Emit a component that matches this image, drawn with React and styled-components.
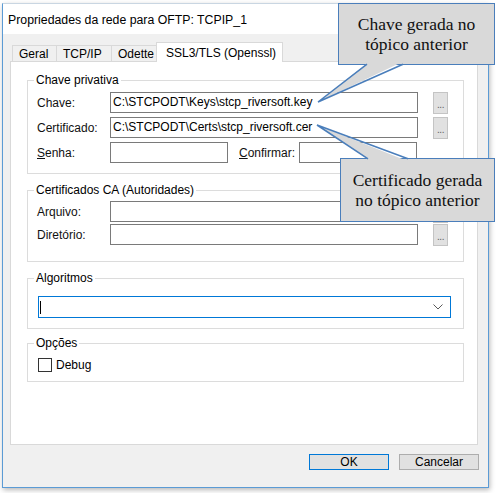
import React from "react";
import styled, { createGlobalStyle } from "styled-components";

const GlobalStyle = createGlobalStyle`
  html, body {
    margin: 0;
    padding: 0;
    background: #ffffff;
  }
  body {
    font-family: "Liberation Sans", Arial, sans-serif;
    font-size: 12px;
    color: #000;
  }
  * { box-sizing: border-box; }
`;

const Page = styled.div`
  position: relative;
  width: 497px;
  height: 493px;
  overflow: hidden;
  padding: 3px 0 0 2px;
`;

const Window = styled.div`
  width: 487px;
  height: 485px;
  border: 1px solid #5b9bd5;
  border-top-color: #c9d6e2;
  box-shadow: 1px 2px 5px rgba(0, 0, 0, 0.28);
  background: #f0f0f0;
  display: flex;
  flex-direction: column;
`;

const TitleBar = styled.div`
  height: 30px;
  flex: none;
  background: #fff;
  display: flex;
  align-items: center;
  padding: 2px 0 0 5px;
  font-size: 12.3px;
  color: #000;
`;

const Client = styled.div`
  flex: 1;
  display: flex;
  flex-direction: column;
  padding: 8px 10px 0 7px;
`;

const TabStrip = styled.div`
  display: flex;
  align-items: flex-end;
  height: 20px;
  padding-left: 3px;
  margin-bottom: -1px;
  position: relative;
  z-index: 1;
`;

const Tab = styled.div`
  width: ${(p) => p.$w}px;
  height: ${(p) => (p.$active ? 20 : 17)}px;
  margin-left: -1px;
  border: 1px solid #d9d9d9;
  border-bottom: ${(p) => (p.$active ? "none" : "1px solid #d9d9d9")};
  background: ${(p) => (p.$active ? "#fff" : "#f0f0f0")};
  display: flex;
  align-items: center;
  padding-left: ${(p) => (p.$active ? 9 : 6)}px;
  font-size: 12px;
  white-space: nowrap;
`;

const Panel = styled.div`
  height: 384px;
  background: #fff;
  border: 1px solid #d9d9d9;
  padding: 11px 13px 0 16px;
  display: flex;
  flex-direction: column;
`;

const Group = styled.fieldset`
  margin: ${(p) => p.$mt || 0}px 0 0;
  padding: 0;
  min-width: 0;
  border: 1px solid #dcdcdc;
`;

const Legend = styled.legend`
  margin-left: 6px;
  padding: 0 2px;
  font-size: 12px;
  line-height: 14px;
  color: #000;
`;

const GroupBody = styled.div`
  display: flex;
  flex-direction: column;
  gap: ${(p) => p.$gap || 0}px;
  padding: ${(p) => p.$pad};
`;

const Row = styled.div`
  display: flex;
  align-items: center;
  height: 21px;
`;

const Label = styled.div`
  width: ${(p) => p.$w || 73}px;
  margin-left: ${(p) => p.$ml || 0}px;
  flex: none;
  font-size: 12px;
  color: #111;
  white-space: nowrap;
`;

const Field = styled.div`
  width: ${(p) => p.$w}px;
  height: 21px;
  flex: none;
  border: 1px solid #7a7a7a;
  background: #fff;
  padding-left: 2px;
  font-size: 12px;
  line-height: 19px;
  white-space: nowrap;
  overflow: hidden;
  color: #000;
`;

const Browse = styled.div`
  width: 15px;
  height: 22px;
  flex: none;
  margin-left: 15px;
  border: 1px solid #c4c4c4;
  background: #e1e1e1;
  color: #5f5f5f;
  font-size: 10px;
  display: flex;
  justify-content: center;
  align-items: flex-end;
  padding-bottom: 4px;
  line-height: 8px;
  letter-spacing: -0.5px;
`;

const Combo = styled.div`
  height: 22px;
  border: 1px solid #0078d7;
  background: #fff;
  display: flex;
  align-items: center;
  justify-content: space-between;
  padding: 0 7px 0 1px;
`;

const Caret = styled.div`
  width: 1px;
  height: 13px;
  background: #000;
`;

const CheckRow = styled.div`
  display: flex;
  align-items: center;
  gap: 4px;
  height: 15px;
`;

const CheckBox = styled.div`
  width: 14px;
  height: 14px;
  border: 1px solid #333;
  background: #fff;
`;

const Footer = styled.div`
  display: flex;
  justify-content: flex-end;
  gap: 10px;
  margin: 9px -1px 0 0;
`;

const Button = styled.div`
  width: 80px;
  height: 16px;
  border: 1px solid ${(p) => (p.$default ? "#0078d7" : "#adadad")};
  background: #e1e1e1;
  display: flex;
  align-items: center;
  justify-content: center;
  font-size: 12px;
  color: #000;
`;

const Callout = styled.div`
  position: absolute;
  left: ${(p) => p.$x}px;
  top: ${(p) => p.$y}px;
  width: ${(p) => p.$w}px;
  height: ${(p) => p.$h}px;
  background: #d9d9d9;
  border: 1.5px solid #4a7ebb;
  display: flex;
  align-items: center;
  justify-content: center;
  text-align: center;
  font-family: "Liberation Serif", "Times New Roman", serif;
  font-size: 17.5px;
  line-height: 20px;
  color: #111;
`;

const TailLayer = styled.svg`
  position: absolute;
  left: 0;
  top: 0;
  pointer-events: none;
`;

const Chevron = () => (
  <svg width="10" height="6" viewBox="0 0 10 6">
    <polyline points="0.5,0.5 5,5 9.5,0.5" fill="none" stroke="#5a5a5a" strokeWidth="1" />
  </svg>
);

export default function App() {
  return (
    <>
      <GlobalStyle />
      <Page>
        <Window>
          <TitleBar>Propriedades da rede para OFTP: TCPIP_1</TitleBar>
          <Client>
            <TabStrip>
              <Tab $w={45}>Geral</Tab>
              <Tab $w={56}>TCP/IP</Tab>
              <Tab $w={46}>Odette</Tab>
              <Tab $w={127} $active>SSL3/TLS (Openssl)</Tab>
            </TabStrip>
            <Panel>
              <Group>
                <Legend>Chave privativa</Legend>
                <GroupBody $gap={4} $pad="5px 15px 10px 9px">
                  <Row>
                    <Label>Chave:</Label>
                    <Field $w={308}>C:\STCPODT\Keys\stcp_riversoft.key</Field>
                    <Browse>...</Browse>
                  </Row>
                  <Row>
                    <Label>Certificado:</Label>
                    <Field $w={308}>C:\STCPODT\Certs\stcp_riversoft.cer</Field>
                    <Browse>...</Browse>
                  </Row>
                  <Row>
                    <Label>
                      <u>S</u>enha:
                    </Label>
                    <Field $w={118} />
                    <Label $w={60} $ml={11}>
                      <u>C</u>onfirmar:
                    </Label>
                    <Field $w={118} />
                  </Row>
                </GroupBody>
              </Group>

              <Group $mt={9}>
                <Legend>Certificados CA (Autoridades)</Legend>
                <GroupBody $gap={2} $pad="4px 15px 16px 9px">
                  <Row>
                    <Label>Arquivo:</Label>
                    <Field $w={308} />
                    <Browse>...</Browse>
                  </Row>
                  <Row>
                    <Label>Diretório:</Label>
                    <Field $w={308} />
                    <Browse>...</Browse>
                  </Row>
                </GroupBody>
              </Group>

              <Group $mt={9}>
                <Legend>Algoritmos</Legend>
                <GroupBody $pad="11px 12px 10px 10px">
                  <Combo>
                    <Caret />
                    <Chevron />
                  </Combo>
                </GroupBody>
              </Group>

              <Group $mt={7}>
                <Legend>Opções</Legend>
                <GroupBody $pad="7px 12px 9px 10px">
                  <CheckRow>
                    <CheckBox />
                    <span>Debug</span>
                  </CheckRow>
                </GroupBody>
              </Group>
            </Panel>
            <Footer>
              <Button $default>OK</Button>
              <Button>Cancelar</Button>
            </Footer>
          </Client>
        </Window>

        <Callout $x={338} $y={3} $w={157} $h={62}>
          Chave gerada no
          <br />
          tópico anterior
        </Callout>
        <Callout $x={340} $y={158} $w={155} $h={64}>
          Certificado gerada
          <br />
          no tópico anterior
        </Callout>

        <TailLayer width="497" height="493" viewBox="0 0 497 493">
          <polygon points="369,62 318,102 402,62" fill="#d9d9d9" />
          <polyline points="367,64.2 318,102 403,64.2" fill="none" stroke="#4a7ebb" strokeWidth="1.5" />
          <polygon points="370,160.5 317,125 406,160.5" fill="#d9d9d9" />
          <polyline points="368,158.8 317,125 408,158.8" fill="none" stroke="#4a7ebb" strokeWidth="1.5" />
        </TailLayer>
      </Page>
    </>
  );
}
